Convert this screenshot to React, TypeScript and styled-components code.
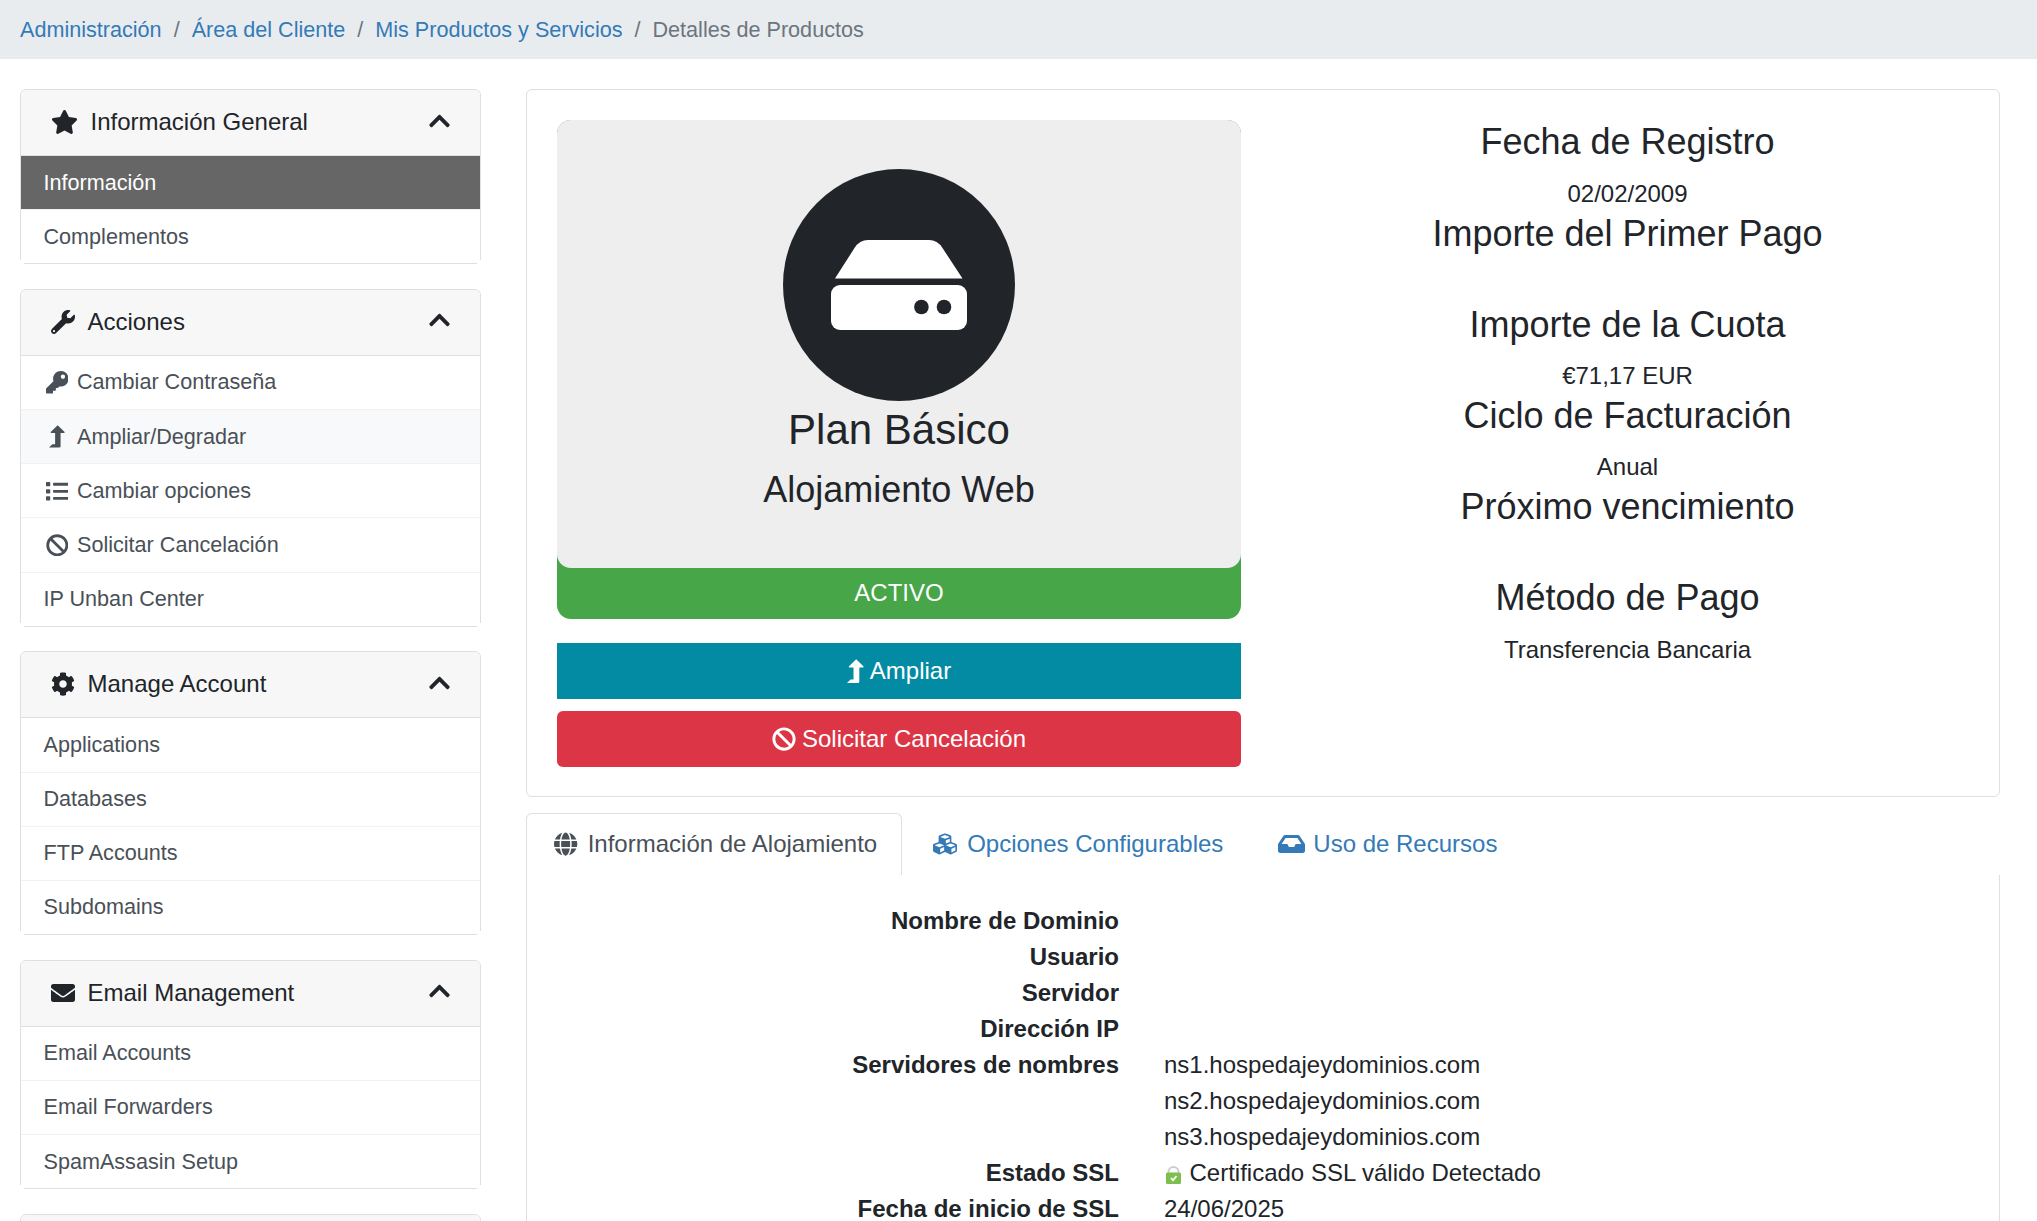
import React from "react";
import styled, { createGlobalStyle } from "styled-components";
import {
  FaBan, FaChevronUp, FaCog, FaCubes, FaEnvelope, FaGlobe, FaInbox, FaKey,
  FaList, FaStar, FaWrench,
} from "react-icons/fa";

const Global = createGlobalStyle`
  html, body { margin: 0; padding: 0; background: #fff; }
  body {
    font-family: "Liberation Sans", Arial, sans-serif;
    font-size: 24px;
    line-height: 36px;
    color: #212529;
    overflow: hidden;
  }
  * { box-sizing: border-box; }
`;

const Page = styled.div`
  width: 2037px;
  height: 1221px;
  overflow: hidden;
`;

const Breadcrumb = styled.nav`
  height: 59px;
  background: #e9ecef;
  display: flex;
  align-items: center;
  padding: 0 20px;
  font-size: 21.6px;
  color: #6c757d;
`;

const Crumb = styled.a`
  color: #337ab7;
  text-decoration: none;
`;

const Sep = styled.span`
  padding: 0 12px;
  color: #6c757d;
`;

const Layout = styled.div`
  display: grid;
  grid-template-columns: 461px 1474px;
  column-gap: 45px;
  padding: 30px 0 0 20px;
  align-items: start;
`;

const Sidebar = styled.aside`
  display: flex;
  flex-direction: column;
  gap: 24.5px;
`;

const Card = styled.section`
  position: relative;
  border: 1px solid #dfdfdf;
  border-radius: 6px 6px 4px 4px;
  background: #fff;
  &::before, &::after {
    content: "";
    position: absolute;
    bottom: -1px;
    width: 4px;
    height: 4px;
    background: #fff;
  }
  &::before { left: -1px; }
  &::after { right: -1px; }
`;

const CardHeader = styled.header`
  height: 66px;
  padding: 0 30px 1px;
  display: flex;
  align-items: center;
  gap: 12.5px;
  background: #f7f7f7;
  border-bottom: 1px solid #dfdfdf;
  border-radius: 6px 6px 0 0;
  color: #212529;
  svg { flex: none; width: 24px; height: 24px; }
`;

const HeaderTitle = styled.span`
  flex: 1;
`;

const StarIcon = styled(FaStar)`
  && { width: 27px; }
`;

const Chevron = styled(FaChevronUp)`
  && { width: 21px; }
  margin-top: -3px;
`;

const Row = styled.a<{ $active?: boolean; $hover?: boolean }>`
  height: 54.2px;
  padding: 0 22.5px;
  display: flex;
  align-items: center;
  font-size: 21.6px;
  text-decoration: none;
  color: ${(p) => (p.$active ? "#fff" : "#495057")};
  background: ${(p) => (p.$active ? "#666666" : p.$hover ? "#f8f9fa" : "#fff")};
  border-bottom: 1px solid #f2f2f2;
  &:last-child { border-bottom: 0; height: 53.2px; }
`;

const IconBox = styled.span<{ $w: number; $icon?: number }>`
  flex: none;
  width: ${(p) => p.$w}px;
  display: inline-flex;
  justify-content: center;
  align-items: center;
  svg { width: ${(p) => p.$icon ?? 24}px; height: 24px; }
`;

const RowIcon = styled(IconBox)`
  margin-right: 6.5px;
  svg { width: auto; height: 22.6px; }
`;

const Main = styled.main`
  min-width: 0;
`;

const Summary = styled.section`
  height: 708px;
  border: 1px solid #dfdfdf;
  border-radius: 6px;
  padding: 30px;
  display: grid;
  grid-template-columns: 684px 1fr;
  column-gap: 45px;
`;

const PlanColumn = styled.div`
  display: flex;
  flex-direction: column;
`;

const StatusBox = styled.div`
  background: #46a648;
  border-radius: 14px;
  color: #fff;
  text-align: center;
`;

const PlanBox = styled.div`
  height: 448px;
  background: #eeeeee;
  border-radius: 14px;
  padding-top: 49px;
  display: flex;
  flex-direction: column;
  align-items: center;
  color: #212529;
`;

const Circle = styled.div`
  width: 232px;
  height: 232px;
  flex: none;
  border-radius: 50%;
  background: #212529;
  display: flex;
  align-items: center;
  justify-content: center;
`;

const PlanName = styled.div`
  margin-top: 4px;
  font-size: 42px;
  line-height: 50.4px;
`;

const PlanType = styled.div`
  margin-top: 13px;
  font-size: 36px;
  line-height: 43.2px;
`;

const StatusLabel = styled.div`
  height: 51px;
  padding-bottom: 2px;
  display: flex;
  align-items: center;
  justify-content: center;
`;

const Button = styled.a<{ $color: string; $radius: number }>`
  height: 56px;
  display: flex;
  align-items: center;
  justify-content: center;
  gap: 6px;
  color: #fff;
  text-decoration: none;
  background: ${(p) => p.$color};
  border-radius: ${(p) => p.$radius}px;
  svg { width: auto; height: 24px; }
`;

const UpgradeButton = styled(Button)`
  margin-top: 24px;
`;

const CancelButton = styled(Button)`
  margin-top: 12px;
`;

const FactsColumn = styled.div`
  text-align: center;
  padding-top: 0.3px;
`;

const FactTitle = styled.h4`
  margin: 0 0 12px;
  font-size: 36px;
  line-height: 43.2px;
  font-weight: 400;
`;

const FactValue = styled.p`
  margin: 0;
  min-height: 36px;
`;

const Tabs = styled.div`
  margin-top: 16px;
  display: flex;
  gap: 3.3px;
  height: 62px;
`;

const Tab = styled.a<{ $active?: boolean }>`
  display: flex;
  align-items: center;
  gap: 6.7px;
  padding: 0 24px 2px 24px;
  text-decoration: none;
  color: ${(p) => (p.$active ? "#495057" : "#337ab7")};
  border: 1px solid ${(p) => (p.$active ? "#dfdfdf" : "transparent")};
  border-bottom: 0;
  border-radius: 6px 6px 0 0;
`;

const Details = styled.section`
  border-left: 1px solid #dfdfdf;
  border-right: 1px solid #dfdfdf;
  padding-top: 28px;
  display: grid;
  grid-template-columns: 592px 1fr;
  column-gap: 45px;
  height: 400px;
  align-content: start;
`;

const DetailLabel = styled.div`
  font-weight: 700;
  text-align: right;
  min-height: 36px;
`;

const DetailValue = styled.div`
  min-height: 36px;
  display: flex;
  align-items: center;
  gap: 9px;
`;

const LockSvg = styled.svg`
  margin-top: 4px;
  margin-left: 1.5px;
`;

const HddIcon = () => (
  <svg width="136" height="90" viewBox="0 0 136 90" aria-hidden="true">
    <path d="M4 38.5 L23.5 8 Q28.500 0 37 0 L98 0 Q106.500 0 111.500 8 L131.500 38.500 Z" fill="#fff" />
    <rect x="0" y="45" width="136" height="45" rx="9" fill="#fff" />
    <circle cx="90.400" cy="67" r="7.300" fill="#212529" />
    <circle cx="113" cy="67" r="7.300" fill="#212529" />
  </svg>
);

const LevelUpIcon = () => (
  <svg viewBox="0 0 17 24" fill="currentColor" aria-hidden="true">
    <path d="M9.200 0.300 L16.600 7.400 Q17 8.500 15.800 8.500 H12.300 V22.500 Q12.300 24 10.800 24 H0 L3.500 20.500 H6.500 V8.500 H2.600 Q1.400 8.500 1.800 7.400 Z" />
  </svg>
);

const LockIcon = () => (
  <LockSvg width="15" height="18" viewBox="0 0 15 18" aria-hidden="true">
    <path d="M2.500 8 V6 a5 5 0 0 1 10 0 V8" fill="none" stroke="#cdcdcd" strokeWidth="2" />
    <rect x="0" y="6.500" width="15" height="11.500" rx="1.500" fill="#7cbf4c" />
    <path d="M5 12 L7 14.300 L10.500 10" fill="none" stroke="#fff" strokeWidth="1.800" />
  </LockSvg>
);

type RowItem = { label: string; icon?: React.ReactNode; active?: boolean; hover?: boolean };
type Group = { title: string; icon: React.ReactNode; rows: RowItem[] };

const groups: Group[] = [
  {
    title: "Información General",
    icon: <StarIcon />,
    rows: [{ label: "Información", active: true }, { label: "Complementos" }],
  },
  {
    title: "Acciones",
    icon: <FaWrench />,
    rows: [
      { label: "Cambiar Contraseña", icon: <FaKey /> },
      { label: "Ampliar/Degradar", icon: <LevelUpIcon />, hover: true },
      { label: "Cambiar opciones", icon: <FaList /> },
      { label: "Solicitar Cancelación", icon: <FaBan /> },
      { label: "IP Unban Center" },
    ],
  },
  {
    title: "Manage Account",
    icon: <FaCog />,
    rows: [
      { label: "Applications" },
      { label: "Databases" },
      { label: "FTP Accounts" },
      { label: "Subdomains" },
    ],
  },
  {
    title: "Email Management",
    icon: <FaEnvelope />,
    rows: [{ label: "Email Accounts" }, { label: "Email Forwarders" }, { label: "SpamAssasin Setup" }],
  },
];

const facts: [string, string][] = [
  ["Fecha de Registro", "02/02/2009"],
  ["Importe del Primer Pago", ""],
  ["Importe de la Cuota", "€71,17 EUR"],
  ["Ciclo de Facturación", "Anual"],
  ["Próximo vencimiento", ""],
  ["Método de Pago", "Transferencia Bancaria"],
];

const details: [string, React.ReactNode][] = [
  ["Nombre de Dominio", ""],
  ["Usuario", ""],
  ["Servidor", ""],
  ["Dirección IP", ""],
  ["Servidores de nombres", "ns1.hospedajeydominios.com"],
  ["", "ns2.hospedajeydominios.com"],
  ["", "ns3.hospedajeydominios.com"],
  ["Estado SSL", <><LockIcon />Certificado SSL válido Detectado</>],
  ["Fecha de inicio de SSL", "24/06/2025"],
];

export default function App() {
  return (
    <Page>
      <Global />
      <Breadcrumb>
        <Crumb>Administración</Crumb>
        <Sep>/</Sep>
        <Crumb>Área del Cliente</Crumb>
        <Sep>/</Sep>
        <Crumb>Mis Productos y Servicios</Crumb>
        <Sep>/</Sep>
        <span>Detalles de Productos</span>
      </Breadcrumb>
      <Layout>
        <Sidebar>
          {groups.map((g) => (
            <Card key={g.title}>
              <CardHeader>
                {g.icon}
                <HeaderTitle>{g.title}</HeaderTitle>
                <Chevron />
              </CardHeader>
              <div>
                {g.rows.map((r) => (
                  <Row key={r.label} $active={r.active} $hover={r.hover}>
                    {r.icon && <RowIcon $w={27}>{r.icon}</RowIcon>}
                    {r.label}
                  </Row>
                ))}
              </div>
            </Card>
          ))}
          <Card>
            <CardHeader />
          </Card>
        </Sidebar>
        <Main>
          <Summary>
            <PlanColumn>
              <StatusBox>
                <PlanBox>
                  <Circle>
                    <HddIcon />
                  </Circle>
                  <PlanName>Plan Básico</PlanName>
                  <PlanType>Alojamiento Web</PlanType>
                </PlanBox>
                <StatusLabel>ACTIVO</StatusLabel>
              </StatusBox>
              <UpgradeButton $color="#038ba4" $radius={0}>
                <LevelUpIcon />
                Ampliar
              </UpgradeButton>
              <CancelButton $color="#dc3545" $radius={6}>
                <FaBan />
                Solicitar Cancelación
              </CancelButton>
            </PlanColumn>
            <FactsColumn>
              {facts.map(([title, value]) => (
                <React.Fragment key={title}>
                  <FactTitle>{title}</FactTitle>
                  <FactValue>{value}</FactValue>
                </React.Fragment>
              ))}
            </FactsColumn>
          </Summary>
          <Tabs>
            <Tab $active>
              <IconBox $w={30} $icon={23.3}><FaGlobe /></IconBox>
              Información de Alojamiento
            </Tab>
            <Tab>
              <IconBox $w={30} $icon={24}><FaCubes /></IconBox>
              Opciones Configurables
            </Tab>
            <Tab>
              <IconBox $w={30} $icon={27}><FaInbox /></IconBox>
              Uso de Recursos
            </Tab>
          </Tabs>
          <Details>
            {details.map(([label, value], i) => (
              <React.Fragment key={i}>
                <DetailLabel>{label}</DetailLabel>
                <DetailValue>{value}</DetailValue>
              </React.Fragment>
            ))}
          </Details>
        </Main>
      </Layout>
    </Page>
  );
}
